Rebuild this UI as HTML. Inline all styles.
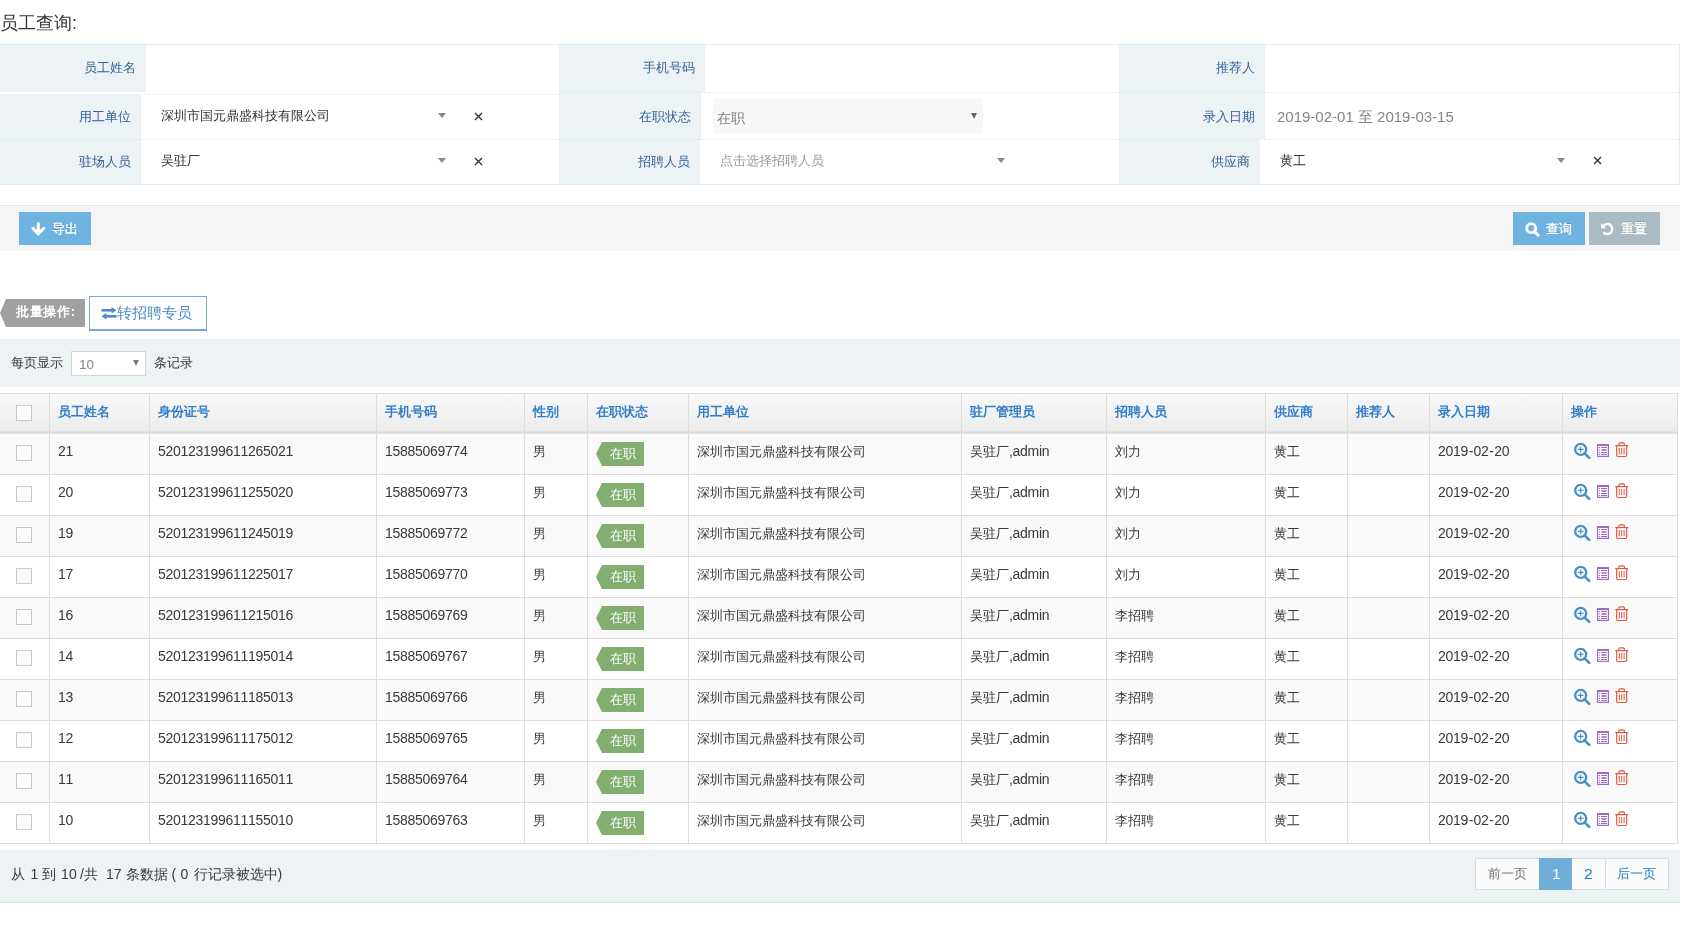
<!DOCTYPE html>
<html><head><meta charset="utf-8">
<style>
*{box-sizing:border-box}
html,body{margin:0;padding:0;background:#fff;width:1697px;height:925px;overflow:hidden}
body{font-family:"Liberation Sans",sans-serif;font-size:13px;color:#393939;position:relative;font-kerning:none;will-change:transform}
.a{position:absolute}
.t{position:absolute;white-space:nowrap;line-height:1}
.title{left:0;top:14px;font-size:18px;color:#333}
.fbox{left:-1px;top:44px;width:1681px;height:141px;border:1px solid #DCEBF7}
.lb{position:absolute;background:#EDF3F4}
.dot{position:absolute;height:1px;border-top:1px dotted #D5E4F1}
.lt{position:absolute;white-space:nowrap;line-height:1;color:#336199;font-size:13px}
.val{position:absolute;white-space:nowrap;line-height:1;color:#333;font-size:13px}
.arr{position:absolute;width:0;height:0;border-left:4px solid transparent;border-right:4px solid transparent;border-top:5px solid #888}
.x{position:absolute;width:9px;height:9px}
.band{left:0;width:1680px}
.btn{position:absolute;color:#fff;font-size:13px;white-space:nowrap;line-height:1;text-shadow:0 -1px 0 rgba(0,0,0,0.25);-webkit-text-stroke:0.35px #fff}
.thead{background:linear-gradient(to bottom,#F8F8F8 0%,#ECECEC 100%)}
.cb{position:absolute;width:16px;height:16px;border:1px solid #C8C8C8;background:#FAFAFA}
.th{color:#307ECC;font-weight:bold;font-size:13px}
.td{color:#393939;font-size:13px;line-height:13px}
.n{font-size:14px;letter-spacing:-0.28px;position:relative;top:0.4px}
.hy{margin:0 0.6px}
.badge{width:48px;height:24px}
.badge:before{content:"";position:absolute;left:0;top:0;border-top:12px solid transparent;border-bottom:12px solid transparent;border-right:6px solid #82AF6F}
.badge span{position:absolute;left:6px;top:0;width:42px;height:24px;background:#82AF6F;color:#fff;font-size:13px;line-height:24px;text-align:center}
.pg{position:absolute;top:858px;height:32px;border:1px solid #D4DFE3;background:#FAFAFA}
</style></head><body>
<div class="t title">员工查询:</div>
<div class="a fbox"></div>
<div class="lb" style="left:0;top:45px;width:146px;height:47px"></div>
<div class="lb" style="left:0;top:95px;width:141px;height:89px"></div>
<div class="dot" style="left:0;top:94px;width:559px"></div>
<div class="dot" style="left:0;top:139px;width:559px"></div>
<div class="lb" style="left:559px;top:45px;width:146px;height:47px"></div>
<div class="lb" style="left:559px;top:92px;width:142px;height:47px"></div>
<div class="lb" style="left:559px;top:139px;width:141px;height:45px"></div>
<div class="dot" style="left:559px;top:92px;width:560px"></div>
<div class="dot" style="left:559px;top:139px;width:560px"></div>
<div class="lb" style="left:1119px;top:45px;width:146px;height:94px"></div>
<div class="lb" style="left:1119px;top:139px;width:141px;height:45px"></div>
<div class="dot" style="left:1119px;top:92px;width:560px"></div>
<div class="dot" style="left:1119px;top:139px;width:560px"></div>
<div class="lt" style="left:84px;top:61px">员工姓名</div>
<div class="lt" style="left:79px;top:110px">用工单位</div>
<div class="lt" style="left:79px;top:155px">驻场人员</div>
<div class="lt" style="left:643px;top:61px">手机号码</div>
<div class="lt" style="left:639px;top:110px">在职状态</div>
<div class="lt" style="left:638px;top:155px">招聘人员</div>
<div class="lt" style="left:1216px;top:61px">推荐人</div>
<div class="lt" style="left:1203px;top:110px">录入日期</div>
<div class="lt" style="left:1211px;top:155px">供应商</div>
<div class="val" style="left:161px;top:109px">深圳市国元鼎盛科技有限公司</div>
<div class="arr" style="left:438px;top:113px"></div>
<svg class="x" style="left:474px;top:112px" viewBox="0 0 9 9"><path d="M1 1L8 8M8 1L1 8" stroke="#333" stroke-width="1.4"/></svg>
<div class="val" style="left:161px;top:154px">吴驻厂</div>
<div class="arr" style="left:438px;top:158px"></div>
<svg class="x" style="left:474px;top:157px" viewBox="0 0 9 9"><path d="M1 1L8 8M8 1L1 8" stroke="#333" stroke-width="1.4"/></svg>
<div class="a" style="left:713px;top:99px;width:270px;height:34px;background:#F8F8F8"></div>
<div class="val" style="left:717px;top:111px;color:#808080;font-size:14px">在职</div>
<div class="a" style="left:971px;top:113px;width:0;height:0;border-left:3px solid transparent;border-right:3px solid transparent;border-top:6px solid #666"></div>
<div class="val" style="left:720px;top:154px;color:#999">点击选择招聘人员</div>
<div class="arr" style="left:997px;top:158px"></div>
<div class="val" style="left:1277px;top:109px;color:#858585;font-size:15px">2019-02-01 至 2019-03-15</div>
<div class="val" style="left:1280px;top:154px">黄工</div>
<div class="arr" style="left:1557px;top:158px"></div>
<svg class="x" style="left:1593px;top:156px" viewBox="0 0 9 9"><path d="M1 1L8 8M8 1L1 8" stroke="#333" stroke-width="1.4"/></svg>
<div class="a band" style="top:205px;height:46px;background:#F5F5F5;border-top:1px solid #E5E5E5"></div>
<div class="a" style="left:19px;top:212px;width:72px;height:33px;background:#6FB3E0"></div>
<div class="a" style="left:1513px;top:212px;width:72px;height:33px;background:#6FB3E0"></div>
<div class="a" style="left:1589px;top:212px;width:71px;height:33px;background:#ABBAC3"></div>
<div class="btn" style="left:52px;top:222px">导出</div>
<div class="btn" style="left:1546px;top:222px">查询</div>
<div class="btn" style="left:1621px;top:222px">重置</div>
<svg class="a" style="left:31px;top:222px" width="15" height="14" viewBox="0 0 15 14"><path d="M7.3 1.6V11M2 6.4L7.3 11.8L12.6 6.4" fill="none" stroke="#fff" stroke-width="3.1" stroke-linecap="round" stroke-linejoin="round"/></svg>
<svg class="a" style="left:1525px;top:222px" width="15" height="15" viewBox="0 0 15 15"><circle cx="6.2" cy="6.2" r="4.5" fill="none" stroke="#fff" stroke-width="2.8"/><path d="M9.6 9.6L13 13" stroke="#fff" stroke-width="3" stroke-linecap="round"/></svg>
<svg class="a" style="left:1600px;top:222px" width="15" height="14" viewBox="0 0 15 14"><path d="M3.2 4.2A5 5 0 1 1 3.4 10.2" fill="none" stroke="#fff" stroke-width="2.4"/><path d="M1 1.2L1.2 6.4L6.2 6.2Z" fill="#fff"/></svg>
<div class="a" style="left:6px;top:299px;width:79px;height:28px;background:#A0A0A0"></div>
<div class="a" style="left:0;top:299px;width:0;height:0;border-top:14px solid transparent;border-bottom:14px solid transparent;border-right:6px solid #A0A0A0"></div>
<div class="btn" style="left:16px;top:305px;font-weight:bold;letter-spacing:0.7px;text-shadow:none;-webkit-text-stroke:0">批量操作:</div>
<div class="a" style="left:89px;top:296px;width:118px;height:35px;border:1px solid #7DA7D2;border-bottom-width:2px;background:#fff"></div>
<svg class="a" style="left:101px;top:307px" width="16" height="13" viewBox="0 0 16 13"><path d="M0.5 3.3H11" stroke="#4A8BC8" stroke-width="2.6"/><path d="M10.5 0L15.5 3.3L10.5 6.6Z" fill="#4A8BC8"/><path d="M5 9.3H15.5" stroke="#4A8BC8" stroke-width="2.6"/><path d="M5.5 6L0.5 9.3L5.5 12.6Z" fill="#4A8BC8"/></svg>
<div class="t" style="left:117px;top:305px;font-size:15px;color:#4A8BC8">转招聘专员</div>
<div class="a band" style="top:339px;height:48px;background:#EDF3F4"></div>
<div class="t" style="left:11px;top:356px;color:#393939">每页显示</div>
<div class="a" style="left:71px;top:351px;width:75px;height:25px;border:1px solid #D5D5D5;background:#fff"></div>
<div class="t" style="left:79px;top:358px;color:#858585;font-size:13.5px">10</div>
<div class="a" style="left:133px;top:360px;width:0;height:0;border-left:3px solid transparent;border-right:3px solid transparent;border-top:6px solid #777"></div>
<div class="t" style="left:154px;top:356px;color:#393939">条记录</div>
<div class="a" style="left:0;top:393px;width:1678px;height:1px;background:#DDD"></div>
<div class="a thead" style="left:0;top:394px;width:1677px;height:37px"></div>
<div class="a" style="left:0;top:431px;width:1678px;height:1px;background:#E3E3E3"></div>
<div class="a" style="left:0;top:432px;width:1678px;height:1px;background:#DCDCDC"></div>
<div class="a" style="left:0;top:433px;width:1678px;height:1px;background:#E0E0E0"></div>
<div class="a" style="left:0;top:434px;width:1677px;height:40px;background:#F9F9F9"></div>
<div class="a" style="left:0;top:474px;width:1678px;height:1px;background:#DDD"></div>
<div class="a" style="left:0;top:475px;width:1677px;height:40px;background:#FFF"></div>
<div class="a" style="left:0;top:515px;width:1678px;height:1px;background:#DDD"></div>
<div class="a" style="left:0;top:516px;width:1677px;height:40px;background:#F9F9F9"></div>
<div class="a" style="left:0;top:556px;width:1678px;height:1px;background:#DDD"></div>
<div class="a" style="left:0;top:557px;width:1677px;height:40px;background:#FFF"></div>
<div class="a" style="left:0;top:597px;width:1678px;height:1px;background:#DDD"></div>
<div class="a" style="left:0;top:598px;width:1677px;height:40px;background:#F9F9F9"></div>
<div class="a" style="left:0;top:638px;width:1678px;height:1px;background:#DDD"></div>
<div class="a" style="left:0;top:639px;width:1677px;height:40px;background:#FFF"></div>
<div class="a" style="left:0;top:679px;width:1678px;height:1px;background:#DDD"></div>
<div class="a" style="left:0;top:680px;width:1677px;height:40px;background:#F9F9F9"></div>
<div class="a" style="left:0;top:720px;width:1678px;height:1px;background:#DDD"></div>
<div class="a" style="left:0;top:721px;width:1677px;height:40px;background:#FFF"></div>
<div class="a" style="left:0;top:761px;width:1678px;height:1px;background:#DDD"></div>
<div class="a" style="left:0;top:762px;width:1677px;height:40px;background:#F9F9F9"></div>
<div class="a" style="left:0;top:802px;width:1678px;height:1px;background:#DDD"></div>
<div class="a" style="left:0;top:803px;width:1677px;height:40px;background:#FFF"></div>
<div class="a" style="left:0;top:843px;width:1678px;height:1px;background:#DDD"></div>
<div class="a" style="left:49px;top:393px;width:1px;height:451px;background:#DDD"></div>
<div class="a" style="left:149px;top:393px;width:1px;height:451px;background:#DDD"></div>
<div class="a" style="left:376px;top:393px;width:1px;height:451px;background:#DDD"></div>
<div class="a" style="left:524px;top:393px;width:1px;height:451px;background:#DDD"></div>
<div class="a" style="left:587px;top:393px;width:1px;height:451px;background:#DDD"></div>
<div class="a" style="left:688px;top:393px;width:1px;height:451px;background:#DDD"></div>
<div class="a" style="left:961px;top:393px;width:1px;height:451px;background:#DDD"></div>
<div class="a" style="left:1106px;top:393px;width:1px;height:451px;background:#DDD"></div>
<div class="a" style="left:1265px;top:393px;width:1px;height:451px;background:#DDD"></div>
<div class="a" style="left:1347px;top:393px;width:1px;height:451px;background:#DDD"></div>
<div class="a" style="left:1429px;top:393px;width:1px;height:451px;background:#DDD"></div>
<div class="a" style="left:1562px;top:393px;width:1px;height:451px;background:#DDD"></div>
<div class="a" style="left:1677px;top:393px;width:1px;height:451px;background:#DDD"></div>
<div class="a cb" style="left:16px;top:405px"></div>
<div class="t th" style="left:58px;top:405px">员工姓名</div>
<div class="t th" style="left:158px;top:405px">身份证号</div>
<div class="t th" style="left:385px;top:405px">手机号码</div>
<div class="t th" style="left:533px;top:405px">性别</div>
<div class="t th" style="left:596px;top:405px">在职状态</div>
<div class="t th" style="left:697px;top:405px">用工单位</div>
<div class="t th" style="left:970px;top:405px">驻厂管理员</div>
<div class="t th" style="left:1115px;top:405px">招聘人员</div>
<div class="t th" style="left:1274px;top:405px">供应商</div>
<div class="t th" style="left:1356px;top:405px">推荐人</div>
<div class="t th" style="left:1438px;top:405px">录入日期</div>
<div class="t th" style="left:1571px;top:405px">操作</div>
<div class="a cb" style="left:16px;top:445px"></div>
<div class="t td" style="left:58px;top:445px"><span class="n">21</span></div>
<div class="t td" style="left:158px;top:445px"><span class="n">520123199611265021</span></div>
<div class="t td" style="left:385px;top:445px"><span class="n">15885069774</span></div>
<div class="t td" style="left:533px;top:445px">男</div>
<div class="a badge" style="left:596px;top:442px"><span>在职</span></div>
<div class="t td" style="left:697px;top:445px">深圳市国元鼎盛科技有限公司</div>
<div class="t td" style="left:970px;top:445px">吴驻厂<span class="n">,admin</span></div>
<div class="t td" style="left:1115px;top:445px">刘力</div>
<div class="t td" style="left:1274px;top:445px">黄工</div>
<div class="t td" style="left:1438px;top:445px"><span class="n">2019<span class="hy">-</span>02<span class="hy">-</span>20</span></div>
<div class="a" style="left:1573px;top:442px"><svg width="18" height="18" viewBox="0 0 18 18"><circle cx="7.7" cy="7.4" r="5.5" fill="none" stroke="#478FCA" stroke-width="2.3"/><path d="M11.6 11.3L16.2 15.9" stroke="#478FCA" stroke-width="2.6" stroke-linecap="round"/><path d="M7.7 4.6V10.2M4.9 7.4H10.5" stroke="#478FCA" stroke-width="1.2"/></svg></div>
<div class="a" style="left:1597px;top:444px"><svg width="12" height="13" viewBox="0 0 12 13"><rect x="0.6" y="0.6" width="10.8" height="11.8" fill="none" stroke="#A069C3" stroke-width="1.2"/><rect x="0" y="0" width="12" height="2" fill="#A069C3"/><path d="M2 3.5H3M2 6H3M2 8.5H3M2 10.5H3M4 3.5H10M4 8.5H10M4 10.5H10" stroke="#A069C3" stroke-width="1"/><path d="M4.5 6H9.5" stroke="#A069C3" stroke-width="1.6"/></svg></div>
<div class="a" style="left:1615px;top:442px"><svg width="14" height="16" viewBox="0 0 14 16"><path d="M0.2 3.6H13.2" stroke="#DD5A43" stroke-width="1.2"/><path d="M3.9 3.2V2Q3.9 0.9 5 0.9H8.3Q9.4 0.9 9.4 2V3.2" fill="none" stroke="#DD5A43" stroke-width="1.2"/><path d="M1.7 4V13.3Q1.7 14.5 2.9 14.5H10.5Q11.7 14.5 11.7 13.3V4" fill="none" stroke="#DD5A43" stroke-width="1.2"/><path d="M4.3 6V12.3M6.7 6V12.3M9.1 6V12.3" stroke="#DD5A43" stroke-width="1"/></svg></div>
<div class="a cb" style="left:16px;top:486px"></div>
<div class="t td" style="left:58px;top:486px"><span class="n">20</span></div>
<div class="t td" style="left:158px;top:486px"><span class="n">520123199611255020</span></div>
<div class="t td" style="left:385px;top:486px"><span class="n">15885069773</span></div>
<div class="t td" style="left:533px;top:486px">男</div>
<div class="a badge" style="left:596px;top:483px"><span>在职</span></div>
<div class="t td" style="left:697px;top:486px">深圳市国元鼎盛科技有限公司</div>
<div class="t td" style="left:970px;top:486px">吴驻厂<span class="n">,admin</span></div>
<div class="t td" style="left:1115px;top:486px">刘力</div>
<div class="t td" style="left:1274px;top:486px">黄工</div>
<div class="t td" style="left:1438px;top:486px"><span class="n">2019<span class="hy">-</span>02<span class="hy">-</span>20</span></div>
<div class="a" style="left:1573px;top:483px"><svg width="18" height="18" viewBox="0 0 18 18"><circle cx="7.7" cy="7.4" r="5.5" fill="none" stroke="#478FCA" stroke-width="2.3"/><path d="M11.6 11.3L16.2 15.9" stroke="#478FCA" stroke-width="2.6" stroke-linecap="round"/><path d="M7.7 4.6V10.2M4.9 7.4H10.5" stroke="#478FCA" stroke-width="1.2"/></svg></div>
<div class="a" style="left:1597px;top:485px"><svg width="12" height="13" viewBox="0 0 12 13"><rect x="0.6" y="0.6" width="10.8" height="11.8" fill="none" stroke="#A069C3" stroke-width="1.2"/><rect x="0" y="0" width="12" height="2" fill="#A069C3"/><path d="M2 3.5H3M2 6H3M2 8.5H3M2 10.5H3M4 3.5H10M4 8.5H10M4 10.5H10" stroke="#A069C3" stroke-width="1"/><path d="M4.5 6H9.5" stroke="#A069C3" stroke-width="1.6"/></svg></div>
<div class="a" style="left:1615px;top:483px"><svg width="14" height="16" viewBox="0 0 14 16"><path d="M0.2 3.6H13.2" stroke="#DD5A43" stroke-width="1.2"/><path d="M3.9 3.2V2Q3.9 0.9 5 0.9H8.3Q9.4 0.9 9.4 2V3.2" fill="none" stroke="#DD5A43" stroke-width="1.2"/><path d="M1.7 4V13.3Q1.7 14.5 2.9 14.5H10.5Q11.7 14.5 11.7 13.3V4" fill="none" stroke="#DD5A43" stroke-width="1.2"/><path d="M4.3 6V12.3M6.7 6V12.3M9.1 6V12.3" stroke="#DD5A43" stroke-width="1"/></svg></div>
<div class="a cb" style="left:16px;top:527px"></div>
<div class="t td" style="left:58px;top:527px"><span class="n">19</span></div>
<div class="t td" style="left:158px;top:527px"><span class="n">520123199611245019</span></div>
<div class="t td" style="left:385px;top:527px"><span class="n">15885069772</span></div>
<div class="t td" style="left:533px;top:527px">男</div>
<div class="a badge" style="left:596px;top:524px"><span>在职</span></div>
<div class="t td" style="left:697px;top:527px">深圳市国元鼎盛科技有限公司</div>
<div class="t td" style="left:970px;top:527px">吴驻厂<span class="n">,admin</span></div>
<div class="t td" style="left:1115px;top:527px">刘力</div>
<div class="t td" style="left:1274px;top:527px">黄工</div>
<div class="t td" style="left:1438px;top:527px"><span class="n">2019<span class="hy">-</span>02<span class="hy">-</span>20</span></div>
<div class="a" style="left:1573px;top:524px"><svg width="18" height="18" viewBox="0 0 18 18"><circle cx="7.7" cy="7.4" r="5.5" fill="none" stroke="#478FCA" stroke-width="2.3"/><path d="M11.6 11.3L16.2 15.9" stroke="#478FCA" stroke-width="2.6" stroke-linecap="round"/><path d="M7.7 4.6V10.2M4.9 7.4H10.5" stroke="#478FCA" stroke-width="1.2"/></svg></div>
<div class="a" style="left:1597px;top:526px"><svg width="12" height="13" viewBox="0 0 12 13"><rect x="0.6" y="0.6" width="10.8" height="11.8" fill="none" stroke="#A069C3" stroke-width="1.2"/><rect x="0" y="0" width="12" height="2" fill="#A069C3"/><path d="M2 3.5H3M2 6H3M2 8.5H3M2 10.5H3M4 3.5H10M4 8.5H10M4 10.5H10" stroke="#A069C3" stroke-width="1"/><path d="M4.5 6H9.5" stroke="#A069C3" stroke-width="1.6"/></svg></div>
<div class="a" style="left:1615px;top:524px"><svg width="14" height="16" viewBox="0 0 14 16"><path d="M0.2 3.6H13.2" stroke="#DD5A43" stroke-width="1.2"/><path d="M3.9 3.2V2Q3.9 0.9 5 0.9H8.3Q9.4 0.9 9.4 2V3.2" fill="none" stroke="#DD5A43" stroke-width="1.2"/><path d="M1.7 4V13.3Q1.7 14.5 2.9 14.5H10.5Q11.7 14.5 11.7 13.3V4" fill="none" stroke="#DD5A43" stroke-width="1.2"/><path d="M4.3 6V12.3M6.7 6V12.3M9.1 6V12.3" stroke="#DD5A43" stroke-width="1"/></svg></div>
<div class="a cb" style="left:16px;top:568px"></div>
<div class="t td" style="left:58px;top:568px"><span class="n">17</span></div>
<div class="t td" style="left:158px;top:568px"><span class="n">520123199611225017</span></div>
<div class="t td" style="left:385px;top:568px"><span class="n">15885069770</span></div>
<div class="t td" style="left:533px;top:568px">男</div>
<div class="a badge" style="left:596px;top:565px"><span>在职</span></div>
<div class="t td" style="left:697px;top:568px">深圳市国元鼎盛科技有限公司</div>
<div class="t td" style="left:970px;top:568px">吴驻厂<span class="n">,admin</span></div>
<div class="t td" style="left:1115px;top:568px">刘力</div>
<div class="t td" style="left:1274px;top:568px">黄工</div>
<div class="t td" style="left:1438px;top:568px"><span class="n">2019<span class="hy">-</span>02<span class="hy">-</span>20</span></div>
<div class="a" style="left:1573px;top:565px"><svg width="18" height="18" viewBox="0 0 18 18"><circle cx="7.7" cy="7.4" r="5.5" fill="none" stroke="#478FCA" stroke-width="2.3"/><path d="M11.6 11.3L16.2 15.9" stroke="#478FCA" stroke-width="2.6" stroke-linecap="round"/><path d="M7.7 4.6V10.2M4.9 7.4H10.5" stroke="#478FCA" stroke-width="1.2"/></svg></div>
<div class="a" style="left:1597px;top:567px"><svg width="12" height="13" viewBox="0 0 12 13"><rect x="0.6" y="0.6" width="10.8" height="11.8" fill="none" stroke="#A069C3" stroke-width="1.2"/><rect x="0" y="0" width="12" height="2" fill="#A069C3"/><path d="M2 3.5H3M2 6H3M2 8.5H3M2 10.5H3M4 3.5H10M4 8.5H10M4 10.5H10" stroke="#A069C3" stroke-width="1"/><path d="M4.5 6H9.5" stroke="#A069C3" stroke-width="1.6"/></svg></div>
<div class="a" style="left:1615px;top:565px"><svg width="14" height="16" viewBox="0 0 14 16"><path d="M0.2 3.6H13.2" stroke="#DD5A43" stroke-width="1.2"/><path d="M3.9 3.2V2Q3.9 0.9 5 0.9H8.3Q9.4 0.9 9.4 2V3.2" fill="none" stroke="#DD5A43" stroke-width="1.2"/><path d="M1.7 4V13.3Q1.7 14.5 2.9 14.5H10.5Q11.7 14.5 11.7 13.3V4" fill="none" stroke="#DD5A43" stroke-width="1.2"/><path d="M4.3 6V12.3M6.7 6V12.3M9.1 6V12.3" stroke="#DD5A43" stroke-width="1"/></svg></div>
<div class="a cb" style="left:16px;top:609px"></div>
<div class="t td" style="left:58px;top:609px"><span class="n">16</span></div>
<div class="t td" style="left:158px;top:609px"><span class="n">520123199611215016</span></div>
<div class="t td" style="left:385px;top:609px"><span class="n">15885069769</span></div>
<div class="t td" style="left:533px;top:609px">男</div>
<div class="a badge" style="left:596px;top:606px"><span>在职</span></div>
<div class="t td" style="left:697px;top:609px">深圳市国元鼎盛科技有限公司</div>
<div class="t td" style="left:970px;top:609px">吴驻厂<span class="n">,admin</span></div>
<div class="t td" style="left:1115px;top:609px">李招聘</div>
<div class="t td" style="left:1274px;top:609px">黄工</div>
<div class="t td" style="left:1438px;top:609px"><span class="n">2019<span class="hy">-</span>02<span class="hy">-</span>20</span></div>
<div class="a" style="left:1573px;top:606px"><svg width="18" height="18" viewBox="0 0 18 18"><circle cx="7.7" cy="7.4" r="5.5" fill="none" stroke="#478FCA" stroke-width="2.3"/><path d="M11.6 11.3L16.2 15.9" stroke="#478FCA" stroke-width="2.6" stroke-linecap="round"/><path d="M7.7 4.6V10.2M4.9 7.4H10.5" stroke="#478FCA" stroke-width="1.2"/></svg></div>
<div class="a" style="left:1597px;top:608px"><svg width="12" height="13" viewBox="0 0 12 13"><rect x="0.6" y="0.6" width="10.8" height="11.8" fill="none" stroke="#A069C3" stroke-width="1.2"/><rect x="0" y="0" width="12" height="2" fill="#A069C3"/><path d="M2 3.5H3M2 6H3M2 8.5H3M2 10.5H3M4 3.5H10M4 8.5H10M4 10.5H10" stroke="#A069C3" stroke-width="1"/><path d="M4.5 6H9.5" stroke="#A069C3" stroke-width="1.6"/></svg></div>
<div class="a" style="left:1615px;top:606px"><svg width="14" height="16" viewBox="0 0 14 16"><path d="M0.2 3.6H13.2" stroke="#DD5A43" stroke-width="1.2"/><path d="M3.9 3.2V2Q3.9 0.9 5 0.9H8.3Q9.4 0.9 9.4 2V3.2" fill="none" stroke="#DD5A43" stroke-width="1.2"/><path d="M1.7 4V13.3Q1.7 14.5 2.9 14.5H10.5Q11.7 14.5 11.7 13.3V4" fill="none" stroke="#DD5A43" stroke-width="1.2"/><path d="M4.3 6V12.3M6.7 6V12.3M9.1 6V12.3" stroke="#DD5A43" stroke-width="1"/></svg></div>
<div class="a cb" style="left:16px;top:650px"></div>
<div class="t td" style="left:58px;top:650px"><span class="n">14</span></div>
<div class="t td" style="left:158px;top:650px"><span class="n">520123199611195014</span></div>
<div class="t td" style="left:385px;top:650px"><span class="n">15885069767</span></div>
<div class="t td" style="left:533px;top:650px">男</div>
<div class="a badge" style="left:596px;top:647px"><span>在职</span></div>
<div class="t td" style="left:697px;top:650px">深圳市国元鼎盛科技有限公司</div>
<div class="t td" style="left:970px;top:650px">吴驻厂<span class="n">,admin</span></div>
<div class="t td" style="left:1115px;top:650px">李招聘</div>
<div class="t td" style="left:1274px;top:650px">黄工</div>
<div class="t td" style="left:1438px;top:650px"><span class="n">2019<span class="hy">-</span>02<span class="hy">-</span>20</span></div>
<div class="a" style="left:1573px;top:647px"><svg width="18" height="18" viewBox="0 0 18 18"><circle cx="7.7" cy="7.4" r="5.5" fill="none" stroke="#478FCA" stroke-width="2.3"/><path d="M11.6 11.3L16.2 15.9" stroke="#478FCA" stroke-width="2.6" stroke-linecap="round"/><path d="M7.7 4.6V10.2M4.9 7.4H10.5" stroke="#478FCA" stroke-width="1.2"/></svg></div>
<div class="a" style="left:1597px;top:649px"><svg width="12" height="13" viewBox="0 0 12 13"><rect x="0.6" y="0.6" width="10.8" height="11.8" fill="none" stroke="#A069C3" stroke-width="1.2"/><rect x="0" y="0" width="12" height="2" fill="#A069C3"/><path d="M2 3.5H3M2 6H3M2 8.5H3M2 10.5H3M4 3.5H10M4 8.5H10M4 10.5H10" stroke="#A069C3" stroke-width="1"/><path d="M4.5 6H9.5" stroke="#A069C3" stroke-width="1.6"/></svg></div>
<div class="a" style="left:1615px;top:647px"><svg width="14" height="16" viewBox="0 0 14 16"><path d="M0.2 3.6H13.2" stroke="#DD5A43" stroke-width="1.2"/><path d="M3.9 3.2V2Q3.9 0.9 5 0.9H8.3Q9.4 0.9 9.4 2V3.2" fill="none" stroke="#DD5A43" stroke-width="1.2"/><path d="M1.7 4V13.3Q1.7 14.5 2.9 14.5H10.5Q11.7 14.5 11.7 13.3V4" fill="none" stroke="#DD5A43" stroke-width="1.2"/><path d="M4.3 6V12.3M6.7 6V12.3M9.1 6V12.3" stroke="#DD5A43" stroke-width="1"/></svg></div>
<div class="a cb" style="left:16px;top:691px"></div>
<div class="t td" style="left:58px;top:691px"><span class="n">13</span></div>
<div class="t td" style="left:158px;top:691px"><span class="n">520123199611185013</span></div>
<div class="t td" style="left:385px;top:691px"><span class="n">15885069766</span></div>
<div class="t td" style="left:533px;top:691px">男</div>
<div class="a badge" style="left:596px;top:688px"><span>在职</span></div>
<div class="t td" style="left:697px;top:691px">深圳市国元鼎盛科技有限公司</div>
<div class="t td" style="left:970px;top:691px">吴驻厂<span class="n">,admin</span></div>
<div class="t td" style="left:1115px;top:691px">李招聘</div>
<div class="t td" style="left:1274px;top:691px">黄工</div>
<div class="t td" style="left:1438px;top:691px"><span class="n">2019<span class="hy">-</span>02<span class="hy">-</span>20</span></div>
<div class="a" style="left:1573px;top:688px"><svg width="18" height="18" viewBox="0 0 18 18"><circle cx="7.7" cy="7.4" r="5.5" fill="none" stroke="#478FCA" stroke-width="2.3"/><path d="M11.6 11.3L16.2 15.9" stroke="#478FCA" stroke-width="2.6" stroke-linecap="round"/><path d="M7.7 4.6V10.2M4.9 7.4H10.5" stroke="#478FCA" stroke-width="1.2"/></svg></div>
<div class="a" style="left:1597px;top:690px"><svg width="12" height="13" viewBox="0 0 12 13"><rect x="0.6" y="0.6" width="10.8" height="11.8" fill="none" stroke="#A069C3" stroke-width="1.2"/><rect x="0" y="0" width="12" height="2" fill="#A069C3"/><path d="M2 3.5H3M2 6H3M2 8.5H3M2 10.5H3M4 3.5H10M4 8.5H10M4 10.5H10" stroke="#A069C3" stroke-width="1"/><path d="M4.5 6H9.5" stroke="#A069C3" stroke-width="1.6"/></svg></div>
<div class="a" style="left:1615px;top:688px"><svg width="14" height="16" viewBox="0 0 14 16"><path d="M0.2 3.6H13.2" stroke="#DD5A43" stroke-width="1.2"/><path d="M3.9 3.2V2Q3.9 0.9 5 0.9H8.3Q9.4 0.9 9.4 2V3.2" fill="none" stroke="#DD5A43" stroke-width="1.2"/><path d="M1.7 4V13.3Q1.7 14.5 2.9 14.5H10.5Q11.7 14.5 11.7 13.3V4" fill="none" stroke="#DD5A43" stroke-width="1.2"/><path d="M4.3 6V12.3M6.7 6V12.3M9.1 6V12.3" stroke="#DD5A43" stroke-width="1"/></svg></div>
<div class="a cb" style="left:16px;top:732px"></div>
<div class="t td" style="left:58px;top:732px"><span class="n">12</span></div>
<div class="t td" style="left:158px;top:732px"><span class="n">520123199611175012</span></div>
<div class="t td" style="left:385px;top:732px"><span class="n">15885069765</span></div>
<div class="t td" style="left:533px;top:732px">男</div>
<div class="a badge" style="left:596px;top:729px"><span>在职</span></div>
<div class="t td" style="left:697px;top:732px">深圳市国元鼎盛科技有限公司</div>
<div class="t td" style="left:970px;top:732px">吴驻厂<span class="n">,admin</span></div>
<div class="t td" style="left:1115px;top:732px">李招聘</div>
<div class="t td" style="left:1274px;top:732px">黄工</div>
<div class="t td" style="left:1438px;top:732px"><span class="n">2019<span class="hy">-</span>02<span class="hy">-</span>20</span></div>
<div class="a" style="left:1573px;top:729px"><svg width="18" height="18" viewBox="0 0 18 18"><circle cx="7.7" cy="7.4" r="5.5" fill="none" stroke="#478FCA" stroke-width="2.3"/><path d="M11.6 11.3L16.2 15.9" stroke="#478FCA" stroke-width="2.6" stroke-linecap="round"/><path d="M7.7 4.6V10.2M4.9 7.4H10.5" stroke="#478FCA" stroke-width="1.2"/></svg></div>
<div class="a" style="left:1597px;top:731px"><svg width="12" height="13" viewBox="0 0 12 13"><rect x="0.6" y="0.6" width="10.8" height="11.8" fill="none" stroke="#A069C3" stroke-width="1.2"/><rect x="0" y="0" width="12" height="2" fill="#A069C3"/><path d="M2 3.5H3M2 6H3M2 8.5H3M2 10.5H3M4 3.5H10M4 8.5H10M4 10.5H10" stroke="#A069C3" stroke-width="1"/><path d="M4.5 6H9.5" stroke="#A069C3" stroke-width="1.6"/></svg></div>
<div class="a" style="left:1615px;top:729px"><svg width="14" height="16" viewBox="0 0 14 16"><path d="M0.2 3.6H13.2" stroke="#DD5A43" stroke-width="1.2"/><path d="M3.9 3.2V2Q3.9 0.9 5 0.9H8.3Q9.4 0.9 9.4 2V3.2" fill="none" stroke="#DD5A43" stroke-width="1.2"/><path d="M1.7 4V13.3Q1.7 14.5 2.9 14.5H10.5Q11.7 14.5 11.7 13.3V4" fill="none" stroke="#DD5A43" stroke-width="1.2"/><path d="M4.3 6V12.3M6.7 6V12.3M9.1 6V12.3" stroke="#DD5A43" stroke-width="1"/></svg></div>
<div class="a cb" style="left:16px;top:773px"></div>
<div class="t td" style="left:58px;top:773px"><span class="n">11</span></div>
<div class="t td" style="left:158px;top:773px"><span class="n">520123199611165011</span></div>
<div class="t td" style="left:385px;top:773px"><span class="n">15885069764</span></div>
<div class="t td" style="left:533px;top:773px">男</div>
<div class="a badge" style="left:596px;top:770px"><span>在职</span></div>
<div class="t td" style="left:697px;top:773px">深圳市国元鼎盛科技有限公司</div>
<div class="t td" style="left:970px;top:773px">吴驻厂<span class="n">,admin</span></div>
<div class="t td" style="left:1115px;top:773px">李招聘</div>
<div class="t td" style="left:1274px;top:773px">黄工</div>
<div class="t td" style="left:1438px;top:773px"><span class="n">2019<span class="hy">-</span>02<span class="hy">-</span>20</span></div>
<div class="a" style="left:1573px;top:770px"><svg width="18" height="18" viewBox="0 0 18 18"><circle cx="7.7" cy="7.4" r="5.5" fill="none" stroke="#478FCA" stroke-width="2.3"/><path d="M11.6 11.3L16.2 15.9" stroke="#478FCA" stroke-width="2.6" stroke-linecap="round"/><path d="M7.7 4.6V10.2M4.9 7.4H10.5" stroke="#478FCA" stroke-width="1.2"/></svg></div>
<div class="a" style="left:1597px;top:772px"><svg width="12" height="13" viewBox="0 0 12 13"><rect x="0.6" y="0.6" width="10.8" height="11.8" fill="none" stroke="#A069C3" stroke-width="1.2"/><rect x="0" y="0" width="12" height="2" fill="#A069C3"/><path d="M2 3.5H3M2 6H3M2 8.5H3M2 10.5H3M4 3.5H10M4 8.5H10M4 10.5H10" stroke="#A069C3" stroke-width="1"/><path d="M4.5 6H9.5" stroke="#A069C3" stroke-width="1.6"/></svg></div>
<div class="a" style="left:1615px;top:770px"><svg width="14" height="16" viewBox="0 0 14 16"><path d="M0.2 3.6H13.2" stroke="#DD5A43" stroke-width="1.2"/><path d="M3.9 3.2V2Q3.9 0.9 5 0.9H8.3Q9.4 0.9 9.4 2V3.2" fill="none" stroke="#DD5A43" stroke-width="1.2"/><path d="M1.7 4V13.3Q1.7 14.5 2.9 14.5H10.5Q11.7 14.5 11.7 13.3V4" fill="none" stroke="#DD5A43" stroke-width="1.2"/><path d="M4.3 6V12.3M6.7 6V12.3M9.1 6V12.3" stroke="#DD5A43" stroke-width="1"/></svg></div>
<div class="a cb" style="left:16px;top:814px"></div>
<div class="t td" style="left:58px;top:814px"><span class="n">10</span></div>
<div class="t td" style="left:158px;top:814px"><span class="n">520123199611155010</span></div>
<div class="t td" style="left:385px;top:814px"><span class="n">15885069763</span></div>
<div class="t td" style="left:533px;top:814px">男</div>
<div class="a badge" style="left:596px;top:811px"><span>在职</span></div>
<div class="t td" style="left:697px;top:814px">深圳市国元鼎盛科技有限公司</div>
<div class="t td" style="left:970px;top:814px">吴驻厂<span class="n">,admin</span></div>
<div class="t td" style="left:1115px;top:814px">李招聘</div>
<div class="t td" style="left:1274px;top:814px">黄工</div>
<div class="t td" style="left:1438px;top:814px"><span class="n">2019<span class="hy">-</span>02<span class="hy">-</span>20</span></div>
<div class="a" style="left:1573px;top:811px"><svg width="18" height="18" viewBox="0 0 18 18"><circle cx="7.7" cy="7.4" r="5.5" fill="none" stroke="#478FCA" stroke-width="2.3"/><path d="M11.6 11.3L16.2 15.9" stroke="#478FCA" stroke-width="2.6" stroke-linecap="round"/><path d="M7.7 4.6V10.2M4.9 7.4H10.5" stroke="#478FCA" stroke-width="1.2"/></svg></div>
<div class="a" style="left:1597px;top:813px"><svg width="12" height="13" viewBox="0 0 12 13"><rect x="0.6" y="0.6" width="10.8" height="11.8" fill="none" stroke="#A069C3" stroke-width="1.2"/><rect x="0" y="0" width="12" height="2" fill="#A069C3"/><path d="M2 3.5H3M2 6H3M2 8.5H3M2 10.5H3M4 3.5H10M4 8.5H10M4 10.5H10" stroke="#A069C3" stroke-width="1"/><path d="M4.5 6H9.5" stroke="#A069C3" stroke-width="1.6"/></svg></div>
<div class="a" style="left:1615px;top:811px"><svg width="14" height="16" viewBox="0 0 14 16"><path d="M0.2 3.6H13.2" stroke="#DD5A43" stroke-width="1.2"/><path d="M3.9 3.2V2Q3.9 0.9 5 0.9H8.3Q9.4 0.9 9.4 2V3.2" fill="none" stroke="#DD5A43" stroke-width="1.2"/><path d="M1.7 4V13.3Q1.7 14.5 2.9 14.5H10.5Q11.7 14.5 11.7 13.3V4" fill="none" stroke="#DD5A43" stroke-width="1.2"/><path d="M4.3 6V12.3M6.7 6V12.3M9.1 6V12.3" stroke="#DD5A43" stroke-width="1"/></svg></div>
<div class="a band" style="top:850px;height:53px;background:#EDF3F4;border-bottom:1px solid #E0E0E0"></div>
<div class="t" style="left:11.2px;top:867px;color:#393939;font-size:14px">从</div>
<div class="t" style="left:30.6px;top:867px;color:#393939;font-size:14px">1</div>
<div class="t" style="left:41.7px;top:867px;color:#393939;font-size:14px">到</div>
<div class="t" style="left:61.1px;top:867px;color:#393939;font-size:14px">10</div>
<div class="t" style="left:80px;top:867px;color:#393939;font-size:14px">/共</div>
<div class="t" style="left:106px;top:867px;color:#393939;font-size:14px">17</div>
<div class="t" style="left:125.5px;top:867px;color:#393939;font-size:14px">条数据</div>
<div class="t" style="left:171.6px;top:867px;color:#393939;font-size:14px">(</div>
<div class="t" style="left:180.6px;top:867px;color:#393939;font-size:14px">0</div>
<div class="t" style="left:193.6px;top:867px;color:#393939;font-size:14px">行记录被选中)</div>
<div class="pg" style="left:1475px;width:65px"></div>
<div class="a" style="left:1539px;top:858px;width:34px;height:32px;background:#6FAED9;border:1px solid #6FAED9"></div>
<div class="pg" style="left:1572px;width:34px;border-left:none"></div>
<div class="pg" style="left:1605px;width:64px"></div>
<div class="t" style="left:1488px;top:867px;color:#777">前一页</div>
<div class="t" style="left:1552px;top:866px;color:#fff;font-size:15.5px">1</div>
<div class="t" style="left:1584px;top:866px;color:#2283C5;font-size:15.5px">2</div>
<div class="t" style="left:1617px;top:867px;color:#2283C5">后一页</div>
</body></html>
